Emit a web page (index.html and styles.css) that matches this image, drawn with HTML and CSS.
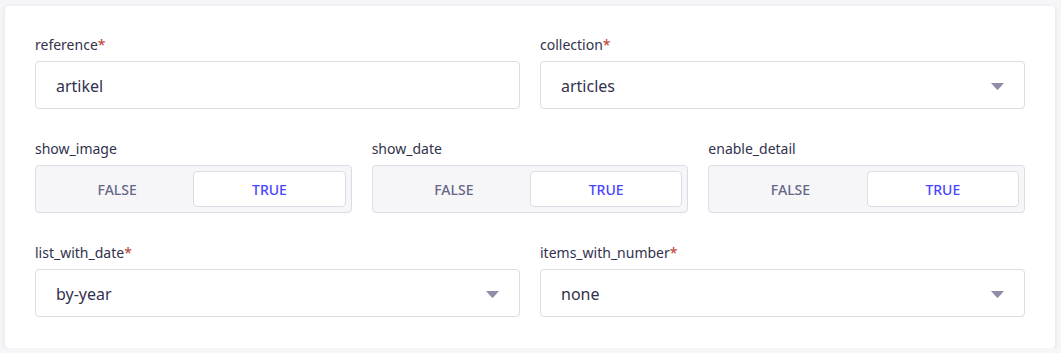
FILE: index.html
```html
<!DOCTYPE html>
<html lang="en">

<head>
  <meta charset="UTF-8" />
  <meta name="viewport" content="width=device-width, initial-scale=1" />
  <title>Component settings</title>
  <link rel="stylesheet" href="styles.css">
</head>

<body>
  <div class="card">
    <div class="row two">
      <div class="field">
        <label class="label">reference<span class="req">*</span></label>
        <div class="input">artikel</div>
      </div>
      <div class="field">
        <label class="label">collection<span class="req">*</span></label>
        <div class="input select">
          <span>articles</span>
          <svg class="caret" width="13" height="7" viewBox="0 0 13 7"><path d="M0 0h13L7.2 6.4a1 1 0 0 1-1.4 0z" /></svg>
        </div>
      </div>
    </div>

    <div class="row three">
      <div class="field">
        <label class="label">show_image</label>
        <div class="toggle">
          <div class="opt">FALSE</div>
          <div class="opt on">TRUE</div>
        </div>
      </div>
      <div class="field">
        <label class="label">show_date</label>
        <div class="toggle">
          <div class="opt">FALSE</div>
          <div class="opt on">TRUE</div>
        </div>
      </div>
      <div class="field">
        <label class="label">enable_detail</label>
        <div class="toggle">
          <div class="opt">FALSE</div>
          <div class="opt on">TRUE</div>
        </div>
      </div>
    </div>

    <div class="row two">
      <div class="field">
        <label class="label">list_with_date<span class="req">*</span></label>
        <div class="input select">
          <span>by-year</span>
          <svg class="caret" width="13" height="7" viewBox="0 0 13 7"><path d="M0 0h13L7.2 6.4a1 1 0 0 1-1.4 0z" /></svg>
        </div>
      </div>
      <div class="field">
        <label class="label">items_with_number<span class="req">*</span></label>
        <div class="input select">
          <span>none</span>
          <svg class="caret" width="13" height="7" viewBox="0 0 13 7"><path d="M0 0h13L7.2 6.4a1 1 0 0 1-1.4 0z" /></svg>
        </div>
      </div>
    </div>
  </div>
</body>

</html>
```

FILE: styles.css
```css
body {
  background-color: #f6f6f9;
  margin: 0;
  padding: 6px 6px 0 5px;
  font-family: "Noto Sans", "Open Sans", sans-serif;
  color: #32324d;
}

.card {
  background-color: #fff;
  border-radius: 4px;
  box-shadow: 0 1px 4px rgba(33, 33, 52, 0.1);
  padding: 31px 30px 31px 30px;
  display: flex;
  flex-direction: column;
  gap: 32px;
}

.row {
  display: grid;
  gap: 20px;
}

.row.two {
  grid-template-columns: 1fr 1fr;
}

.row.three {
  grid-template-columns: 1fr 1fr 1fr;
}

.field {
  display: flex;
  flex-direction: column;
  gap: 8px;
}

.label {
  font-size: 14px;
  line-height: 16px;
  color: #32324d;
}

.req {
  color: #c0392b;
}

.input {
  height: 48px;
  box-sizing: border-box;
  border: 1px solid #dcdce4;
  border-radius: 4px;
  padding: 2px 20px 0 20px;
  display: flex;
  align-items: center;
  font-size: 16px;
  color: #32324d;
}

.select {
  justify-content: space-between;
}

.caret {
  fill: #8e8ea9;
}

.toggle {
  height: 48px;
  box-sizing: border-box;
  border: 1px solid #dcdce4;
  border-radius: 4px;
  background-color: #f6f6f9;
  padding: 5px;
  display: grid;
  grid-template-columns: 1fr 1fr;
}

.opt {
  display: flex;
  align-items: center;
  justify-content: center;
  font-size: 14px;
  font-weight: 500;
  color: #666687;
  border-radius: 4px;
  border: 1px solid transparent;
}

.opt.on {
  background-color: #fff;
  border-color: #dcdce4;
  color: #4945ff;
}
```
